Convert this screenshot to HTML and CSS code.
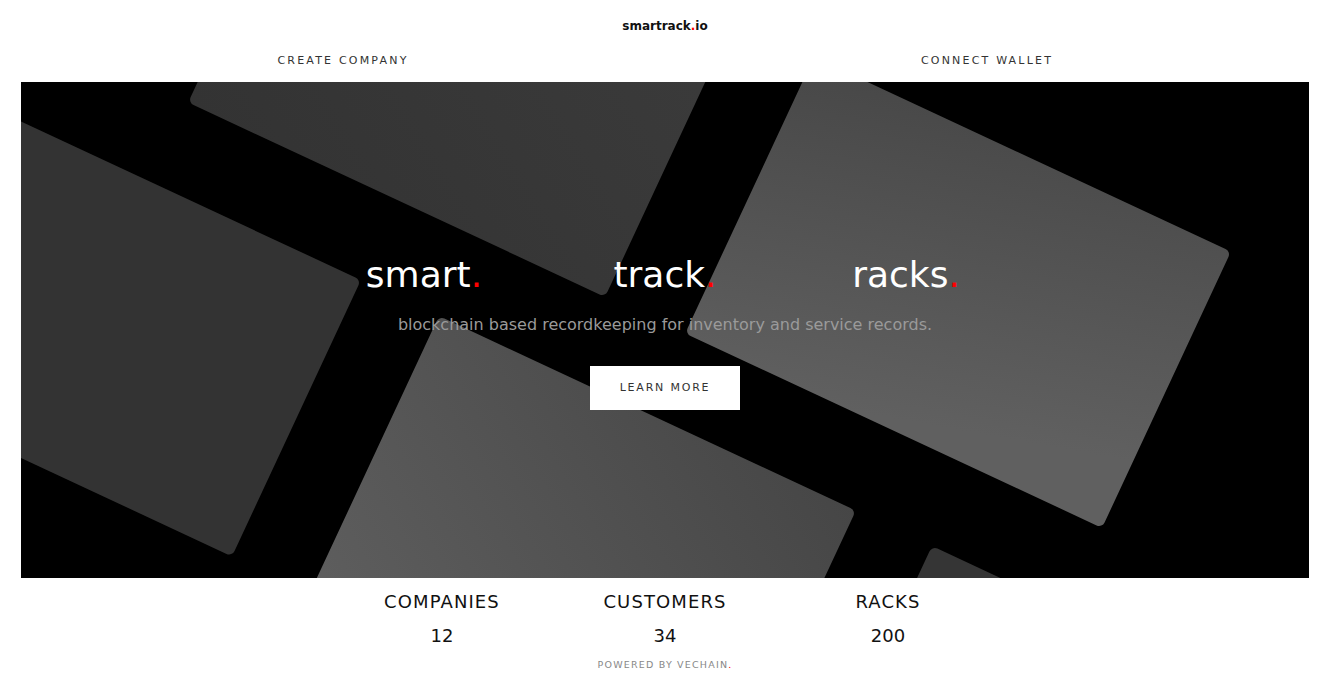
FILE: index.html
```html
<!DOCTYPE html>
<html lang="en">
<head>
<meta charset="utf-8">
<title>smartrack.io</title>
<link rel="stylesheet" href="styles.css">
</head>
<body>
<div class="page">
  <header class="site-header">
    <div class="brand">smartrack<span class="dot">.</span>io</div>
  </header>
  <nav class="nav">
    <a class="nav-link" href="#">CREATE COMPANY</a>
    <a class="nav-link" href="#">CONNECT WALLET</a>
  </nav>
  <section class="hero">
    <svg class="hero-bg" viewBox="21 82 1288 496" preserveAspectRatio="none" aria-hidden="true">
      <defs>
        <linearGradient id="g1" x1="0" y1="1" x2="1" y2="0">
          <stop offset="0" stop-color="#333333"/>
          <stop offset="1" stop-color="#3b3b3b"/>
        </linearGradient>
        <linearGradient id="g3" x1="0" y1="0" x2="0.4" y2="1">
          <stop offset="0" stop-color="#474747"/>
          <stop offset="1" stop-color="#606060"/>
        </linearGradient>
        <linearGradient id="g4" x1="0" y1="1" x2="1" y2="0">
          <stop offset="0" stop-color="#5e5e5e"/>
          <stop offset="1" stop-color="#464646"/>
        </linearGradient>
      </defs>
      <rect x="231" y="-91" width="460" height="305" rx="6" fill="url(#g1)" transform="rotate(25 461 61.6)"/>
      <rect x="-142" y="168.5" width="460" height="305" rx="6" fill="#333333" transform="rotate(25 88 321)"/>
      <rect x="728" y="140" width="460" height="305" rx="6" fill="url(#g3)" transform="rotate(25 958 292.6)"/>
      <rect x="353" y="399" width="460" height="305" rx="6" fill="url(#g4)" transform="rotate(25 583 551.4)"/>
      <rect x="846" y="629" width="460" height="305" rx="6" fill="#353535" transform="rotate(25 1076 781.4)"/>
    </svg>
    <div class="hero-content">
      <h1 class="hero-title">
        <span class="word">smart<span class="dot">.</span></span>
        <span class="word">track<span class="dot">.</span></span>
        <span class="word">racks<span class="dot">.</span></span>
      </h1>
      <p class="hero-sub">blockchain based recordkeeping for inventory and service records.</p>
      <a class="btn" href="#">LEARN MORE</a>
    </div>
  </section>
  <section class="stats">
    <div class="stat"><div class="stat-label">COMPANIES</div><div class="stat-value">12</div></div>
    <div class="stat"><div class="stat-label">CUSTOMERS</div><div class="stat-value">34</div></div>
    <div class="stat"><div class="stat-label">RACKS</div><div class="stat-value">200</div></div>
  </section>
  <footer class="footer">POWERED BY VECHAIN<span class="dot">.</span></footer>
</div>
</body>
</html>
```
FILE: styles.css
```css
* { box-sizing: border-box; }
html, body { margin: 0; padding: 0; background: #fff; }
body {
  font-family: "DejaVu Sans", "Noto Sans", sans-serif;
  color: #111;
}
.page {
  padding: 0 24px 0 21px;
}
.dot { color: #ff0000; }

.site-header {
  height: 50px;
  padding-top: 2px;
  display: flex;
  align-items: center;
  justify-content: center;
}
.brand {
  font-size: 12px;
  font-weight: bold;
  color: #111;
}

.nav {
  display: grid;
  grid-template-columns: 1fr 1fr;
  height: 32px;
  align-items: start;
  padding-top: 1px;
}
.nav-link {
  justify-self: center;
  font-size: 11px;
  letter-spacing: 2.2px;
  color: #333;
  text-decoration: none;
  line-height: 20px;
}

.hero {
  position: relative;
  height: 496px;
  background: #000;
  overflow: hidden;
  display: flex;
  align-items: center;
  justify-content: center;
}
.hero-bg {
  position: absolute;
  left: 0;
  top: 0;
  width: 100%;
  height: 100%;
}
.hero-content {
  position: relative;
  display: flex;
  flex-direction: column;
  align-items: center;
  padding-top: 2px;
}
.hero-title {
  margin: 0;
  display: grid;
  grid-template-columns: repeat(3, 241px);
  font-size: 36px;
  font-weight: normal;
  color: #fff;
  line-height: 44px;
}
.word { justify-self: center; }
.hero-sub {
  margin: 17px 0 0;
  font-size: 16px;
  color: #9a9a9a;
  line-height: 22px;
}
.btn {
  margin-top: 30px;
  width: 150px;
  height: 44px;
  background: #fff;
  display: flex;
  align-items: center;
  justify-content: center;
  font-size: 11px;
  letter-spacing: 1.8px;
  color: #333;
  text-decoration: none;
}

.stats {
  display: grid;
  grid-template-columns: repeat(3, 223px);
  justify-content: center;
  padding-top: 13px;
}
.stat {
  display: flex;
  flex-direction: column;
  align-items: center;
}
.stat-label {
  font-size: 18px;
  letter-spacing: 1.1px;
  line-height: 22px;
  color: #111;
}
.stat-value {
  margin-top: 12px;
  font-size: 18px;
  line-height: 22px;
  color: #111;
}
.footer {
  text-align: center;
  font-size: 9.5px;
  letter-spacing: 1.2px;
  color: #888;
  margin-top: 11px;
  line-height: 14px;
}
```
